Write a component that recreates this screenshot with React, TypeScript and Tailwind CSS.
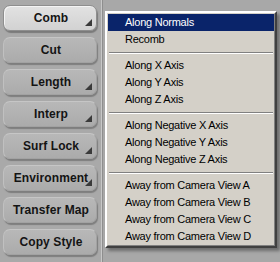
const buttons = [
  { label: "Comb", arrow: true, active: true },
  { label: "Cut", arrow: false },
  { label: "Length", arrow: true },
  { label: "Interp", arrow: true },
  { label: "Surf Lock", arrow: true },
  { label: "Environment", arrow: true },
  { label: "Transfer Map", arrow: false },
  { label: "Copy Style", arrow: false },
];

type Item = { label: string; selected?: boolean } | "sep";

const items: Item[] = [
  { label: "Along Normals", selected: true },
  { label: "Recomb" },
  "sep",
  { label: "Along X Axis" },
  { label: "Along Y Axis" },
  { label: "Along Z Axis" },
  "sep",
  { label: "Along Negative X Axis" },
  { label: "Along Negative Y Axis" },
  { label: "Along Negative Z Axis" },
  "sep",
  { label: "Away from Camera View A" },
  { label: "Away from Camera View B" },
  { label: "Away from Camera View C" },
  { label: "Away from Camera View D" },
];

function ToolButton({ label, arrow, active }: { label: string; arrow: boolean; active?: boolean }) {
  return (
    <div
      className={
        active
          ? "relative h-[26px] w-[94px] rounded-[7px] border border-[#8e8e8e] bg-gradient-to-b from-[#e2e2e2] to-[#d2d2d2] shadow-[inset_1px_1px_0_#f4f4f4,1px_2px_1px_#7a7a7a] flex items-center justify-center pl-[2px]"
          : "relative h-[26px] w-[94px] rounded-[7px] border border-[#a2a2a2] border-t-[#c6c6c6] border-l-[#c0c0c0] bg-gradient-to-b from-[#b8b8b8] to-[#ababab] shadow-[1px_2px_1px_#7e7e7e] flex items-center justify-center pl-[2px]"
      }
    >
      <span className="text-[12px] font-bold text-[#141414] leading-none tracking-[0.1px]">{label}</span>
      {arrow && (
        <svg className="absolute left-[81px] top-[13px]" width="7" height="7" viewBox="0 0 7 7">
          <polygon points="7,0 7,7 0,7" fill="#3a3a3a" />
        </svg>
      )}
    </div>
  );
}

export default function App() {
  return (
    <div
      className="relative w-[280px] h-[262px] overflow-hidden bg-[#a9a9a9] flex"
      style={{ fontFamily: '"Liberation Sans", Arial, sans-serif' }}
    >
      {/* Left tool panel */}
      <div className="w-[101px] h-full flex flex-col gap-[6px] pt-[5px] pl-[3px]">
        {buttons.map((b) => (
          <ToolButton key={b.label} label={b.label} arrow={b.arrow} active={b.active} />
        ))}
      </div>
      <div className="w-[1px] h-full bg-[#c8c8c8]" />
      <div className="w-[1px] h-full bg-[#8e8e8e]" />
      <div className="flex-1 h-full bg-[#a8a8a8]" />

      {/* Popup menu */}
      <div className="absolute left-[105px] top-[11px] w-[172px] bg-[#d4d0c8] border-2 border-t-white border-l-white border-r-[#404040] border-b-[#404040] shadow-[3px_3px_3px_rgba(0,0,0,0.35)] p-[1px]">
        <div className="absolute inset-0 pointer-events-none border border-t-[#d4d0c8] border-l-[#d4d0c8] border-r-[#808080] border-b-[#808080]" />
        {items.map((it, i) =>
          it === "sep" ? (
            <div key={i} className="h-[9px] flex flex-col justify-center px-[1px]">
              <div className="h-[1px] bg-[#808080]" />
              <div className="h-[1px] bg-white" />
            </div>
          ) : (
            <div
              key={i}
              className={
                it.selected
                  ? "h-[17px] flex items-center pl-[17px] bg-[#0a246a] text-white text-[11px] tracking-[-0.25px] leading-none"
                  : "h-[17px] flex items-center pl-[17px] text-black text-[11px] tracking-[-0.25px] leading-none"
              }
            >
              {it.label}
            </div>
          )
        )}
      </div>
    </div>
  );
}
